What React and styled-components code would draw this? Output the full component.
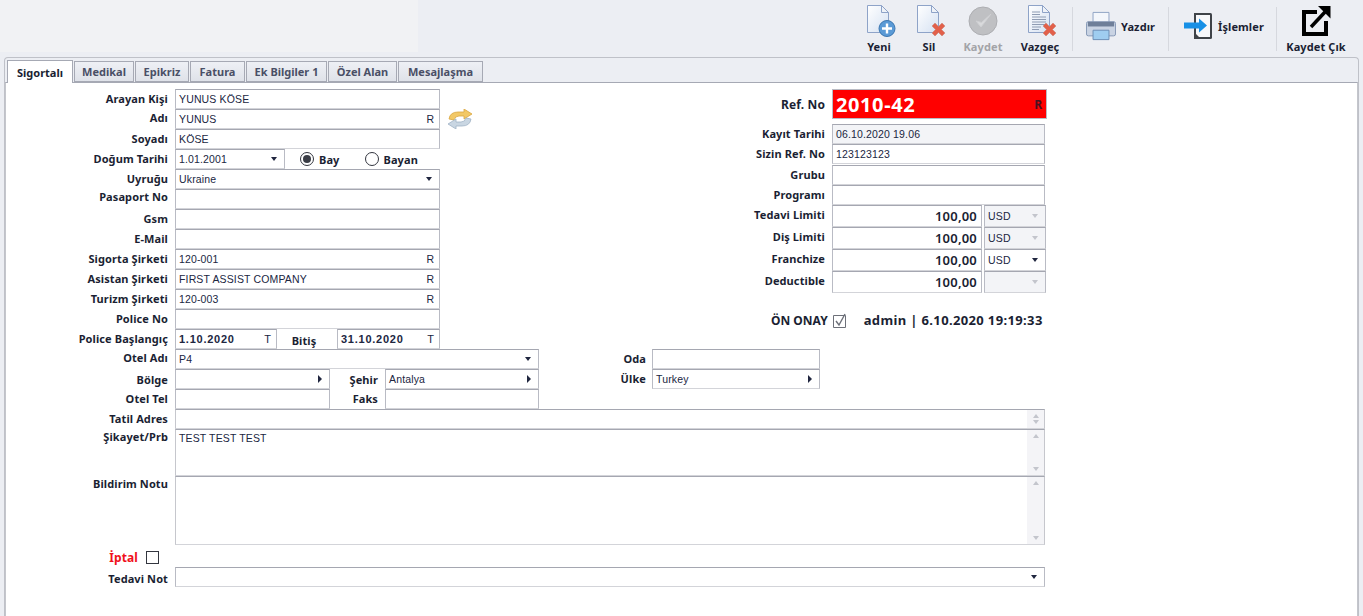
import styled, { createGlobalStyle } from "styled-components";

const GlobalStyle = createGlobalStyle`
    html, body { margin: 0; padding: 0; height: 100%; background: #eceef3; }
    #root { height: 100%; }
    body { font-family: "Noto Sans", "Liberation Sans", sans-serif; overflow: hidden; }
`;

const Page = styled.div`
    width: 1363px;
    height: 616px;
    display: flex;
    flex-direction: column;
    overflow: hidden;
`;

const Toolbar = styled.div`
    height: 57px;
    flex: none;
    display: flex;
    align-items: flex-start;
    padding-right: 8px;
`;

const BlankArea = styled.div`
    width: 418px;
    height: 52px;
    background: #f1f2f4;
    margin-right: auto;
`;

const ToolButton = styled.div`
    width: ${(p) => p.$w}px;
    height: 56px;
    flex: none;
    display: flex;
    flex-direction: column;
    align-items: center;
    padding-top: 4px;
    box-sizing: border-box;
    font-size: 11px;
    font-weight: 700;
    letter-spacing: 0.1px;
    line-height: 15px;
    color: ${(p) => (p.$off ? "#a3a4a8" : "#1b1f33")};
    svg { display: block; height: 34px; margin-bottom: 1px; }
`;

const WideButton = styled.div`
    width: ${(p) => p.$w}px;
    height: 52px;
    flex: none;
    display: flex;
    align-items: center;
    gap: 5px;
    padding-left: ${(p) => p.$pad}px;
    box-sizing: border-box;
    font-size: 11px;
    font-weight: 700;
    letter-spacing: 0.1px;
    color: #1b1f33;
`;

const Sep = styled.div`
    width: 1px;
    height: 44px;
    margin-top: 7px;
    margin-left: ${(p) => p.$ml || 0}px;
    background: #d6d8de;
    flex: none;
`;

const Outer = styled.div`
    flex: 1;
    margin: 0 4px 0 4px;
    border: 1px solid #bfc1c8;
    border-bottom: 0;
    border-radius: 4px 4px 0 0;
    padding-top: 1px;
    display: flex;
    flex-direction: column;
    min-height: 0;
`;

const TabBar = styled.div`
    height: 23px;
    flex: none;
    display: flex;
    align-items: flex-end;
    gap: 1px;
    padding-left: 2px;
`;

const Tab = styled.div`
    width: ${(p) => p.$w}px;
    height: ${(p) => (p.$active ? 23 : 21)}px;
    flex: none;
    box-sizing: border-box;
    display: flex;
    align-items: center;
    justify-content: center;
    font-size: 11px;
    font-weight: 700;
    border: 1px solid #a6a9b4;
    border-bottom: ${(p) => (p.$active ? "0" : "1px solid #a6a9b4")};
    background: ${(p) => (p.$active ? "#fff" : "linear-gradient(#eef0f5, #dfe2e9)")};
    color: ${(p) => (p.$active ? "#1b1f33" : "#4a4f66")};
    margin-bottom: ${(p) => (p.$active ? "-1px" : "0")};
    position: relative;
    z-index: ${(p) => (p.$active ? 1 : 0)};
`;

const Body = styled.div`
    flex: 1;
    background: #fff;
    border-top: 1px solid #a6a9b4;
    border-left: 1px solid #c4c6cc;
    border-right: 1px solid #c4c6cc;
    padding-top: 6px;
`;

const Top = styled.div`
    display: flex;
    align-items: flex-start;
    height: 260px;
`;

const LeftCol = styled.div`
    width: 434px;
    flex: none;
`;

const RightCol = styled.div`
    margin-left: 292px;
    width: 322px;
    flex: none;
`;

const Row = styled.div`
    display: flex;
    height: ${(p) => p.$h || 20}px;
    margin-top: ${(p) => p.$mt || 0}px;
    align-items: stretch;
`;

const Label = styled.div`
    width: ${(p) => p.$w || 162}px;
    margin-right: ${(p) => (p.$gap === undefined ? 7 : p.$gap)}px;
    flex: none;
    box-sizing: border-box;
    display: flex;
    align-items: ${(p) => (p.$top ? "flex-start" : "center")};
    justify-content: ${(p) => (p.$left ? "center" : "flex-end")};
    font-size: ${(p) => p.$size || 11}px;
    font-weight: 700;
    letter-spacing: 0.1px;
    white-space: nowrap;
    color: ${(p) => p.$color || "#1b1f33"};
    padding-bottom: ${(p) => (p.$up || 0) + 2}px;
    padding-top: ${(p) => p.$down || 0}px;
`;

const Field = styled.div`
    width: ${(p) => p.$w}px;
    margin-left: ${(p) => p.$ml || 0}px;
    flex: none;
    box-sizing: border-box;
    display: flex;
    align-items: center;
    padding: 0 4px 0 3px;
    background: ${(p) => p.$bg || "#fff"};
    border: 1px solid #b9bbc4;
    border-top-color: #a5a7b1;
    border-bottom-color: #d3d4d9;
    font-family: "Liberation Sans", sans-serif;
    font-size: ${(p) => p.$size || 10.5}px;
    font-weight: ${(p) => (p.$bold ? 700 : 400)};
    color: #20263f;
    white-space: nowrap;
`;

const Value = styled.span`
    flex: 1;
    min-width: 0;
    letter-spacing: ${(p) => p.$track || 0.15}px;
`;

const Amount = styled.span`
    flex: 1;
    text-align: right;
    font-family: "Noto Sans", sans-serif;
    font-size: 13px;
    font-weight: 600;
    letter-spacing: 0.2px;
    color: #1b1f33;
`;

const Suffix = styled.span`
    flex: none;
    margin-right: 1px;
    font-weight: 400;
`;

const ArrowDown = styled.i`
    flex: none;
    width: 0;
    height: 0;
    margin-right: 3px;
    border: 3.5px solid transparent;
    border-bottom: 0;
    border-top: 4px solid ${(p) => (p.$off ? "#c3c5cc" : "#20263f")};
`;

const ArrowUp = styled.i`
    width: 0;
    height: 0;
    border: 3.5px solid transparent;
    border-top: 0;
    border-bottom: 4px solid #c3c5cc;
`;

const ArrowDownSmall = styled.i`
    width: 0;
    height: 0;
    border: 3.5px solid transparent;
    border-bottom: 0;
    border-top: 4px solid #c3c5cc;
`;

const ArrowRight = styled.i`
    flex: none;
    width: 0;
    height: 0;
    margin-right: 3px;
    border: 4px solid transparent;
    border-right: 0;
    border-left: 4px solid #20263f;
`;

const RefreshSlot = styled.div`
    margin-left: 7px;
    flex: none;
    display: flex;
    align-items: center;
`;

const RadioWrap = styled.div`
    display: flex;
    align-items: center;
    gap: 5px;
    font-size: 11px;
    font-weight: 700;
    letter-spacing: 0.1px;
    color: #1b1f33;
    margin-left: ${(p) => p.$ml}px;
`;

const RadioDot = styled.span`
    width: 14px;
    height: 14px;
    box-sizing: border-box;
    border: 1px solid #33363f;
    border-radius: 50%;
    display: flex;
    align-items: center;
    justify-content: center;
    &::after {
        content: "";
        display: ${(p) => (p.$on ? "block" : "none")};
        width: 8px;
        height: 8px;
        border-radius: 50%;
        background: #3a3d46;
    }
`;

const RefBox = styled.div`
    width: 215px;
    height: 30px;
    box-sizing: border-box;
    flex: none;
    background: #ff0000;
    border: 1px solid #b9bbc4;
    display: flex;
    align-items: center;
    justify-content: space-between;
    padding: 0 4px 0 3px;
    font-size: 20px;
    letter-spacing: 0.6px;
    font-weight: 700;
    color: #fff;
`;

const RefTag = styled.span`
    font-size: 12px;
    letter-spacing: 0;
    color: #4a1020;
`;

const Spacer = styled.div`
    height: ${(p) => p.$h}px;
`;

const Approval = styled.div`
    display: flex;
    align-items: center;
    margin-top: 18px;
    height: 18px;
    padding-left: 39px;
    font-size: 12px;
    font-weight: 700;
    color: #1b1f33;
    white-space: nowrap;
`;

const ApproveBox = styled.span`
    margin: 0 17px 0 5px;
    display: flex;
`;

const Stamp = styled.span`
    font-size: 13px;
    letter-spacing: 0.36px;
`;

const TextBox = styled.div`
    width: 870px;
    flex: none;
    box-sizing: border-box;
    display: flex;
    border: 1px solid #c6c7cd;
    border-top-color: #a5a7b1;
    border-bottom-color: #d3d4d9;
    font-family: "Liberation Sans", sans-serif;
    font-size: 10.5px;
    letter-spacing: 0.15px;
    color: #20263f;
`;

const TextArea = styled.div`
    flex: 1;
    padding: 2px 3px;
`;

const ScrollStrip = styled.div`
    width: 17px;
    flex: none;
    background: #f4f4f7;
    display: flex;
    flex-direction: column;
    align-items: center;
    justify-content: space-between;
    padding: 4px 0 4px;
    box-sizing: border-box;
`;

const CheckSquare = styled.span`
    width: 13px;
    height: 13px;
    box-sizing: border-box;
    border: 1px solid #33363f;
    margin-left: 8px;
    align-self: center;
    margin-top: 3px;
`;

const DocIcon = ({ id, lines, children }) => (
    <svg width="34" height="34" viewBox="0 0 34 34">
        <defs>
            <linearGradient id={id} x1="0" y1="0" x2="1" y2="1">
                <stop offset="0" stopColor="#ffffff" />
                <stop offset="1" stopColor="#d5e1f2" />
            </linearGradient>
        </defs>
        <path d="M5.5 1.5h14l7 7v20h-21z" fill={`url(#${id})`} stroke="#8ea3c8" />
        <path d="M19.5 1.5v7h7z" fill="#eef2f8" stroke="#8ea3c8" />
        {lines && (
            <path
                d="M9 8h8M9 10.5h8M9 13h14M9 15.5h14M9 18h14M9 20.5h14M9 23h9M9 25.5h7"
                stroke="#8f9cb3"
                strokeWidth="1"
            />
        )}
        {children}
    </svg>
);

const RedCross = () => (
    <path
        d="M20 22l3-3 3.500 3.500 3.500-3.500 3 3-3.500 3.500 3.500 3.500-3 3-3.500-3.500-3.500 3.500-3-3 3.500-3.500z"
        fill="#e2604a"
        stroke="#c9867a"
        strokeWidth="0.6"
    />
);

const NewIcon = () => (
    <DocIcon id="docNew">
        <circle cx="25" cy="24.500" r="8" fill="#5a9ad6" stroke="#3b76b0" />
        <path d="M25 19.500v10M20 24.500h10" stroke="#fff" strokeWidth="2.400" />
    </DocIcon>
);

const SaveIcon = () => (
    <svg width="34" height="34" viewBox="0 0 34 34">
        <circle cx="17" cy="17" r="14" fill="#bfc0c3" stroke="#adaeb2" />
        <path d="M10 17l5 6 10-13-9.500 8.500z" fill="#d9dadc" stroke="#cfd0d3" strokeWidth="1" />
    </svg>
);

const PrinterIcon = () => (
    <svg width="30" height="30" viewBox="0 0 32 32">
        <path d="M7.500 1.500h17v12h-17z" fill="#f3f6fb" stroke="#8ba0c2" />
        <path d="M2 11.500h28q1.500 0 1.500 2v11q0 2-2 2h-27q-2 0-2-2v-11q0-2 1.500-2z" fill="#c9d3e3" stroke="#8295b4" />
        <path d="M2 11.500h28v5H2z" fill="#6f7f99" />
        <path d="M7.500 20.500h17v10h-17z" fill="#9fcdf0" stroke="#6a8cb4" />
    </svg>
);

const ActionsIcon = () => (
    <svg width="30" height="30" viewBox="0 0 30 30">
        <path d="M11 2h16.500q1.500 0 1.500 1.500v23q0 1.500-1.500 1.500H11z" fill="#3f4348" />
        <path d="M13 4h14v22H16l-3-3z" fill="#f7f8fa" />
        <path d="M1 11.500h15v-4l8 7-8 7v-4H1z" fill="#1790e6" />
    </svg>
);

const ExitIcon = () => (
    <svg width="32" height="34" viewBox="0 0 32 34">
        <path d="M17 8H4v22h22V17" fill="none" stroke="#000" strokeWidth="4" />
        <path d="M11 23L25 8" fill="none" stroke="#000" strokeWidth="3.500" />
        <path d="M18 2h12.500v12.500z" fill="#000" />
    </svg>
);

const RefreshIcon = () => (
    <svg width="26" height="20" viewBox="0 0 26 20">
        <path d="M2 10Q3 3 11 3h6V0l8 5-8 5V7h-5Q8 7 7 11z" fill="#f2c866" stroke="#d9a63f" strokeWidth="0.8" />
        <path d="M24 10q-1 7-9 7H9v3l-8-5 8-5v3h5q4 0 5-4z" fill="#c9d6e2" stroke="#9fb2c5" strokeWidth="0.8" />
    </svg>
);

const TickBox = () => (
    <svg width="14" height="15" viewBox="0 0 14 15">
        <path d="M.5 2.500h12v12H.5z" fill="#fff" stroke="#6d7079" />
        <path d="M3 8l3 4 6-11" fill="none" stroke="#6d7079" strokeWidth="1.400" />
    </svg>
);

const tabs = [
    ["Sigortalı", 66],
    ["Medikal", 60],
    ["Epikriz", 54],
    ["Fatura", 55],
    ["Ek Bilgiler 1", 81],
    ["Özel Alan", 69],
    ["Mesajlaşma", 85],
];

const TextRow = ({ label, value, suffix, up, h = 20 }) => (
    <Row $h={h}>
        <Label $up={up}>{label}</Label>
        <Field $w={265}>
            <Value>{value}</Value>
            {suffix && <Suffix>{suffix}</Suffix>}
        </Field>
    </Row>
);

const LimitRow = ({ label, currency, off }) => (
    <Row $h={22}>
        <Label $w={93} $up={2}>{label}</Label>
        <Field $w={150}>
            <Amount>100,00</Amount>
        </Field>
        <Field $w={62} $ml={2} $bg={off ? "#f3f4f7" : "#fff"}>
            <Value>{currency}</Value>
            <ArrowDown $off={off} />
        </Field>
    </Row>
);

const InfoRow = ({ label, value, bg, up }) => (
    <Row>
        <Label $w={93} $up={up}>{label}</Label>
        <Field $w={213} $bg={bg}>
            <Value>{value}</Value>
        </Field>
    </Row>
);

const Scroll = () => (
    <ScrollStrip>
        <ArrowUp />
        <ArrowDownSmall />
    </ScrollStrip>
);

export default function App() {
    return (
        <Page>
            <GlobalStyle />
            <Toolbar>
                <BlankArea />
                <ToolButton $w={50}><NewIcon />Yeni</ToolButton>
                <ToolButton $w={50}>
                    <DocIcon id="docDel"><RedCross /></DocIcon>
                    Sil
                </ToolButton>
                <ToolButton $w={58} $off><SaveIcon />Kaydet</ToolButton>
                <ToolButton $w={56}>
                    <DocIcon id="docCancel" lines><RedCross /></DocIcon>
                    Vazgeç
                </ToolButton>
                <Sep $ml={4} />
                <WideButton $w={95} $pad={13}><PrinterIcon />Yazdır</WideButton>
                <Sep />
                <WideButton $w={107} $pad={14}><ActionsIcon />İşlemler</WideButton>
                <Sep />
                <ToolButton $w={78}><ExitIcon />Kaydet Çık</ToolButton>
            </Toolbar>
            <Outer>
                <TabBar>
                    {tabs.map(([name, w], i) => (
                        <Tab key={name} $w={w} $active={i === 0}>{name}</Tab>
                    ))}
                </TabBar>
                <Body>
                    <Top>
                        <LeftCol>
                            <TextRow label="Arayan Kişi" value="YUNUS KÖSE" />
                            <Row>
                                <Label $up={2}>Adı</Label>
                                <Field $w={265}>
                                    <Value>YUNUS</Value>
                                    <Suffix>R</Suffix>
                                </Field>
                                <RefreshSlot><RefreshIcon /></RefreshSlot>
                            </Row>
                            <TextRow label="Soyadı" value="KÖSE" />
                            <Row>
                                <Label>Doğum Tarihi</Label>
                                <Field $w={110}>
                                    <Value>1.01.2001</Value>
                                    <ArrowDown />
                                </Field>
                                <RadioWrap $ml={15}><RadioDot $on />Bay</RadioWrap>
                                <RadioWrap $ml={25}><RadioDot />Bayan</RadioWrap>
                            </Row>
                            <Row>
                                <Label>Uyruğu</Label>
                                <Field $w={265}>
                                    <Value>Ukraine</Value>
                                    <ArrowDown />
                                </Field>
                            </Row>
                            <TextRow label="Pasaport No" up={4} />
                            <TextRow label="Gsm" />
                            <TextRow label="E-Mail" />
                            <TextRow label="Sigorta Şirketi" value="120-001" suffix="R" />
                            <TextRow label="Asistan Şirketi" value="FIRST ASSIST COMPANY" suffix="R" />
                            <TextRow label="Turizm Şirketi" value="120-003" suffix="R" />
                            <TextRow label="Police No" />
                            <Row>
                                <Label>Police Başlangıç</Label>
                                <Field $w={102} $bold $size={11}>
                                    <Value $track={0.75}>1.10.2020</Value>
                                    <Suffix>T</Suffix>
                                </Field>
                                <Label $w={54} $gap={6} $left $down={4}>Bitiş</Label>
                                <Field $w={103} $bold $size={11}>
                                    <Value $track={0.75}>31.10.2020</Value>
                                    <Suffix>T</Suffix>
                                </Field>
                            </Row>
                        </LeftCol>
                        <RightCol>
                            <Row $h={30}>
                                <Label $w={93} $size={12} $down={2}>Ref. No</Label>
                                <RefBox>
                                    2010-42
                                    <RefTag>R</RefTag>
                                </RefBox>
                            </Row>
                            <Spacer $h={5} />
                            <InfoRow label="Kayıt Tarihi" value="06.10.2020 19.06" bg="#f3f4f7" />
                            <InfoRow label="Sizin Ref. No" value="123123123" />
                            <Spacer $h={1} />
                            <InfoRow label="Grubu" />
                            <InfoRow label="Programı" />
                            <LimitRow label="Tedavi Limiti" currency="USD" off />
                            <LimitRow label="Diş Limiti" currency="USD" off />
                            <LimitRow label="Franchize" currency="USD" />
                            <LimitRow label="Deductible" off />
                            <Approval>
                                ÖN ONAY
                                <ApproveBox><TickBox /></ApproveBox>
                                <Stamp>admin | 6.10.2020 19:19:33</Stamp>
                            </Approval>
                        </RightCol>
                    </Top>
                    <Row>
                        <Label $up={2}>Otel Adı</Label>
                        <Field $w={364}>
                            <Value>P4</Value>
                            <ArrowDown />
                        </Field>
                        <Label $w={107} $gap={6}>Oda</Label>
                        <Field $w={168} />
                    </Row>
                    <Row>
                        <Label $down={2}>Bölge</Label>
                        <Field $w={155}>
                            <Value />
                            <ArrowRight />
                        </Field>
                        <Label $w={48} $down={2}>Şehir</Label>
                        <Field $w={154}>
                            <Value>Antalya</Value>
                            <ArrowRight />
                        </Field>
                        <Label $w={107} $gap={6}>Ülke</Label>
                        <Field $w={168}>
                            <Value>Turkey</Value>
                            <ArrowRight />
                        </Field>
                    </Row>
                    <Row>
                        <Label>Otel Tel</Label>
                        <Field $w={155} />
                        <Label $w={48}>Faks</Label>
                        <Field $w={154} />
                    </Row>
                    <Row>
                        <Label>Tatil Adres</Label>
                        <TextBox><TextArea /><Scroll /></TextBox>
                    </Row>
                    <Row $h={47}>
                        <Label $top>Şikayet/Prb</Label>
                        <TextBox>
                            <TextArea>TEST TEST TEST</TextArea>
                            <Scroll />
                        </TextBox>
                    </Row>
                    <Row $h={69}>
                        <Label $top>Bildirim Notu</Label>
                        <TextBox><TextArea /><Scroll /></TextBox>
                    </Row>
                    <Row $h={22}>
                        <Label $w={132} $gap={0} $size={12} $color="#f0101c" $down={4}>İptal</Label>
                        <CheckSquare />
                    </Row>
                    <Row>
                        <Label $down={4}>Tedavi Not</Label>
                        <Field $w={870}>
                            <Value />
                            <ArrowDown />
                        </Field>
                    </Row>
                </Body>
            </Outer>
        </Page>
    );
}
